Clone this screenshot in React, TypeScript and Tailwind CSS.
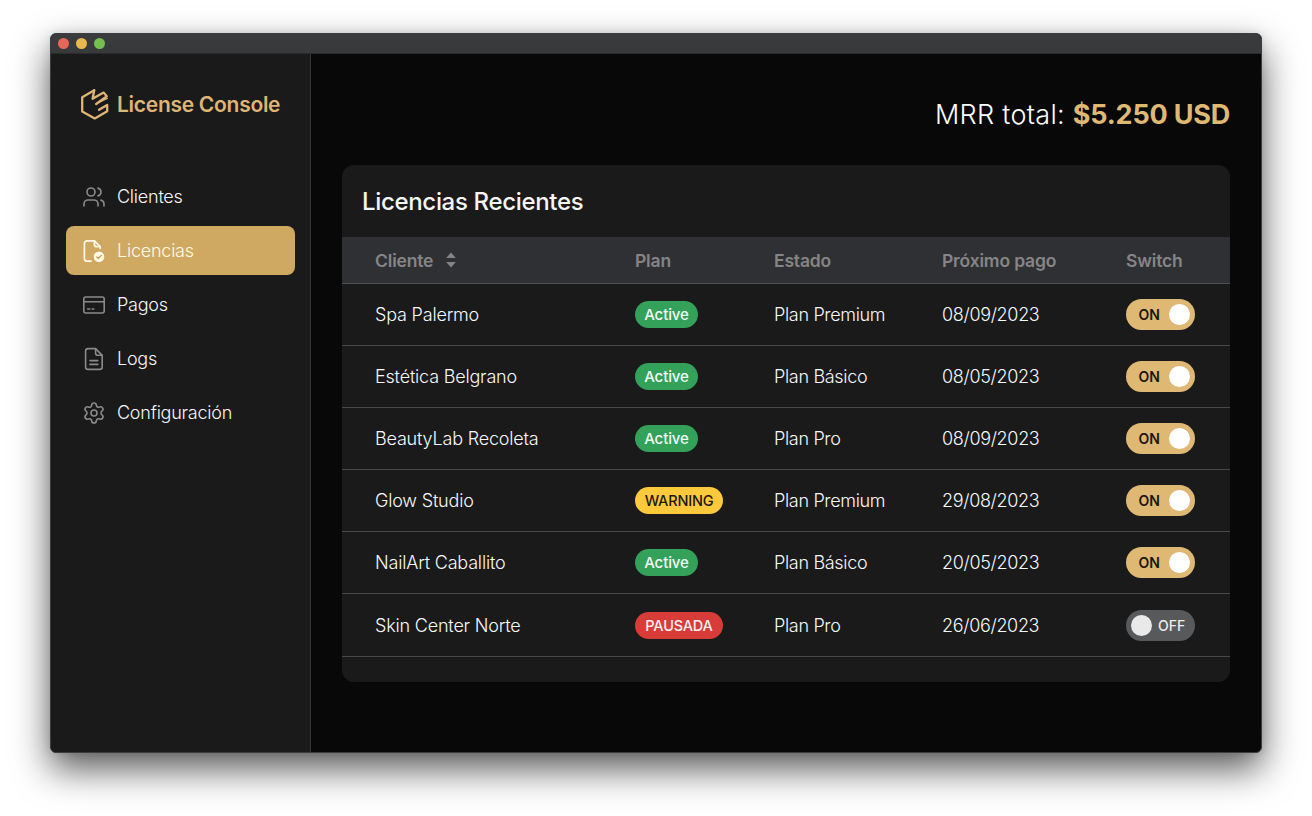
import type { ReactNode } from "react";
import { Settings, Users } from "lucide-react";

type Status = "active" | "warning" | "paused";

const licenses: { client: string; status: Status; plan: string; nextPayment: string; enabled: boolean }[] = [
    { client: "Spa Palermo", status: "active", plan: "Plan Premium", nextPayment: "08/09/2023", enabled: true },
    { client: "Estética Belgrano", status: "active", plan: "Plan Básico", nextPayment: "08/05/2023", enabled: true },
    { client: "BeautyLab Recoleta", status: "active", plan: "Plan Pro", nextPayment: "08/09/2023", enabled: true },
    { client: "Glow Studio", status: "warning", plan: "Plan Premium", nextPayment: "29/08/2023", enabled: true },
    { client: "NailArt Caballito", status: "active", plan: "Plan Básico", nextPayment: "20/05/2023", enabled: true },
    { client: "Skin Center Norte", status: "paused", plan: "Plan Pro", nextPayment: "26/06/2023", enabled: false },
];

const badges: Record<Status, { label: string; className: string }> = {
    active: { label: "Active", className: "w-[63px] bg-[#33a15a] text-[15px] text-[#f1fbf3] tracking-[-0.1px]" },
    warning: { label: "WARNING", className: "w-[88px] bg-[#fdc93c] text-[14.5px] text-[#1d1808] tracking-[-0.2px]" },
    paused: { label: "PAUSADA", className: "w-[88px] bg-[#d73c39] text-[14.5px] text-[#fdf0ef] tracking-[-0.2px]" },
};

const columns = "grid grid-cols-[260px_139px_168px_184px_1fr] items-center pl-[33px]";

function Logo() {
    return (
        <svg width="30" height="32" viewBox="0 0 30 32" fill="none" stroke="#dfb576" strokeWidth="2.3" strokeLinejoin="round" strokeLinecap="round">
            <path d="M14.2 2.2 2.2 9.2v14.2l12.6 7 12.4-7.2v-6.2l-8.2 4.8" />
            <path d="M14.2 2.2 12.6 10.8l11-6.2 3.2 3.6-10.6 7.8" />
            <path d="m19 14.4 8.2-4" strokeWidth="1.4" />
        </svg>
    );
}

function LicenseIcon() {
    return (
        <svg width="24" height="24" viewBox="0 0 24 24" fill="none" stroke="#fff9e8" strokeWidth="1.7" strokeLinecap="round" strokeLinejoin="round">
            <path d="M9 22.2H5a2.6 2.6 0 0 1-2.6-2.6V4.4A2.6 2.6 0 0 1 5 1.8h7.4l5.8 5.9v1.6" />
            <path d="M12.4 2v3.6a2 2 0 0 0 2 2h3.6" />
            <circle cx="17" cy="17.8" r="5.3" fill="#fff9e8" stroke="none" />
            <path d="m14.7 17.9 1.6 1.6 3-3.1" stroke="#c89e55" strokeWidth="1.3" />
        </svg>
    );
}

function PaymentIcon() {
    return (
        <svg width="24" height="24" viewBox="0 0 24 24" fill="none" stroke="currentColor" strokeWidth="1.6" strokeLinecap="round" strokeLinejoin="round">
            <rect x="1.8" y="4" width="20.4" height="16" rx="2" />
            <path d="M1.8 8.8h20.4M5.6 16h2.2M10.2 16h1.6" />
        </svg>
    );
}

function LogIcon() {
    return (
        <svg width="24" height="24" viewBox="0 0 24 24" fill="none" stroke="currentColor" strokeWidth="1.6" strokeLinecap="round" strokeLinejoin="round">
            <path d="M13.6 1.6H6a2.4 2.4 0 0 0-2.4 2.4v16A2.4 2.4 0 0 0 6 22.4h11.8a2.4 2.4 0 0 0 2.4-2.4V8.4z" />
            <path d="M13.6 1.8v4.4a2 2 0 0 0 2 2H20M8 13.6h7.8M8 17.4h7.8" />
        </svg>
    );
}

function NavItem({ icon, label, active = false }: { icon: ReactNode; label: string; active?: boolean }) {
    return (
        <a
            className={`flex h-[49px] items-center gap-[11.5px] rounded-lg pl-[15.5px] text-[18px] font-light tracking-[-0.23px] ${
                active ? "bg-[#cfa962] text-[#fff9e8]" : "text-[#f7f7f7]"
            }`}
        >
            <span className="flex w-6 justify-center text-[#8a8a8a]">{icon}</span>
            {label}
        </a>
    );
}

function Toggle({ on }: { on: boolean }) {
    return (
        <button
            type="button"
            className={`flex h-[31px] w-[69px] items-center rounded-full text-[14px] tracking-normal ${
                on ? "justify-end gap-[9px] bg-[#dfb874] pr-[5px] font-semibold text-[#1c160c]" : "gap-[6px] bg-[#58595b] pl-[5px] font-medium text-[#ececec]"
            }`}
        >
            {on && <span>ON</span>}
            <span className={`size-[21px] rounded-full ${on ? "bg-white" : "bg-[#e9e9e9]"}`} />
            {!on && <span>OFF</span>}
        </button>
    );
}

export default function App() {
    return (
        <div className="h-[816px] w-[1312px] overflow-hidden bg-white pt-[33px] pl-[50px] font-['Inter',sans-serif]">
            <div className="flex h-[720px] w-[1212px] flex-col overflow-hidden rounded-[6px] border border-[#3c3d3e] bg-[#080808] shadow-[0_16px_36px_rgba(0,0,0,0.65),0_0_10px_rgba(0,0,0,0.1)]">
                <div className="flex h-5 shrink-0 items-center gap-[7px] border-b border-[#2a2b2c] bg-linear-to-b from-[#3a3b3d] to-[#38393b] pl-[6.5px]">
                    <span className="size-[11px] rounded-full bg-[#e5675a]" />
                    <span className="size-[11px] rounded-full bg-[#e6b84f]" />
                    <span className="size-[11px] rounded-full bg-[#73bf50]" />
                </div>

                <div className="flex min-h-0 flex-1">
                    <aside className="w-[260px] shrink-0 border-r border-[#343536] bg-[#1a1a1a] px-[15px]">
                        <div className="flex h-[100px] items-center gap-[7px] pl-[14px] text-[21px] font-semibold tracking-[-0.28px] text-[#dfb576]">
                            <Logo />
                            <span className="pt-0.5">License Console</span>
                        </div>
                        <nav className="mt-[18px] flex flex-col gap-[5px]">
                            <NavItem icon={<Users size={24} strokeWidth={1.6} />} label="Clientes" />
                            <NavItem icon={<LicenseIcon />} label="Licencias" active />
                            <NavItem icon={<PaymentIcon />} label="Pagos" />
                            <NavItem icon={<LogIcon />} label="Logs" />
                            <NavItem icon={<Settings size={24} strokeWidth={1.6} />} label="Configuración" />
                        </nav>
                    </aside>

                    <main className="flex-1 pr-[31px] pl-[31px]">
                        <div className="flex h-[111px] items-center justify-end pt-[11px] text-[27px] text-white">
                            <p className="font-light tracking-[0.3px]">
                                MRR total: <span className="font-bold tracking-[-0.2px] text-[#dfb874]">$5.250 USD</span>
                            </p>
                        </div>

                        <section className="h-[517px] overflow-hidden rounded-xl bg-[#1a1a1a]">
                            <h1 className="flex h-[72px] items-center pt-px pl-5 text-[24px] font-medium tracking-[-0.33px] text-[#f5f5f5]">Licencias Recientes</h1>
                            <div className={`${columns} h-[47px] border-b border-[#505153] bg-[#2f3033] pt-0.5 text-[17.5px] font-semibold tracking-[-0.17px] text-[#858587]`}>
                                <div className="flex items-center gap-[13px]">
                                    Cliente
                                    <svg className="-mt-0.5" width="10" height="16" viewBox="0 0 10 16" fill="#858587">
                                        <path d="M5 0.5 9.8 6H0.2zM5 15.5 9.8 10H0.2z" />
                                    </svg>
                                </div>
                                <div>Plan</div>
                                <div>Estado</div>
                                <div>Próximo pago</div>
                                <div>Switch</div>
                            </div>
                            {licenses.map((license) => {
                                const badge = badges[license.status];
                                return (
                                    <div
                                        key={license.client}
                                        className={`${columns} h-[62px] border-b border-[#474849] text-[18px] font-light tracking-[-0.33px] text-[#f8f8f8] last:h-[63px]`}
                                    >
                                        <div className="tracking-[-0.19px]">{license.client}</div>
                                        <div>
                                            <span className={`flex h-[27px] items-center justify-center rounded-full pt-px font-medium ${badge.className}`}>
                                                {badge.label}
                                            </span>
                                        </div>
                                        <div>{license.plan}</div>
                                        <div>{license.nextPayment}</div>
                                        <Toggle on={license.enabled} />
                                    </div>
                                );
                            })}
                        </section>
                    </main>
                </div>
            </div>
        </div>
    );
}
